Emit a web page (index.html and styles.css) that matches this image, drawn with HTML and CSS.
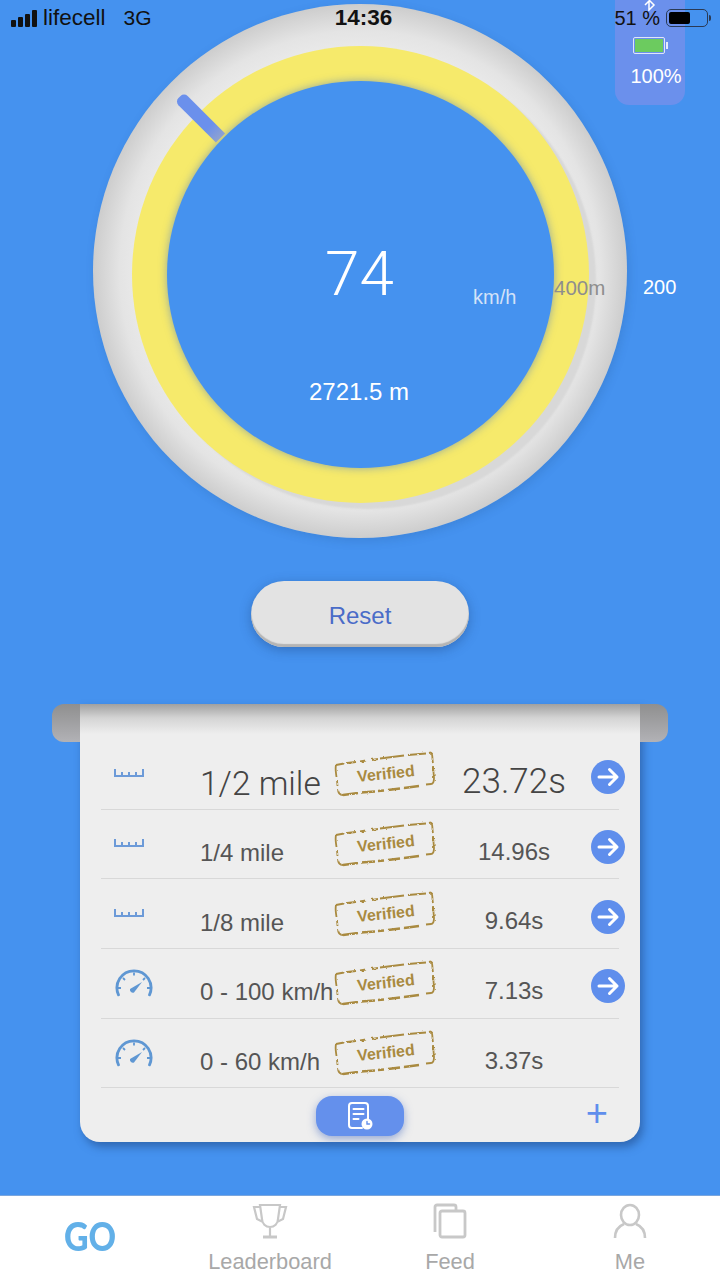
FILE: index.html
```html
<!DOCTYPE html>
<html lang="en">

<head>
   <meta charset="UTF-8">
   <meta name="viewport" content="width=device-width, initial-scale=1.0">
   <title>Drag timer</title>
   <link rel="stylesheet" href="styles.css">
</head>

<body>
   <svg class="defs" width="0" height="0">
      <!-- worn ink edge for the stamps -->
      <filter id="rough" x="-5%" y="-5%" width="110%" height="110%">
         <feTurbulence type="fractalNoise" baseFrequency="0.35" numOctaves="2" seed="4" />
         <feDisplacementMap in="SourceGraphic" scale="2.500" />
      </filter>
      <symbol id="ruler" viewBox="0 0 30 9">
         <path d="M1 1v7h28V1M8 4v4M15 4v4M22 4v4" fill="none" stroke="#6c9ad8" stroke-width="2" />
      </symbol>
      <symbol id="dial" viewBox="0 0 40 28">
         <path d="M4.500 25.800A17 17 0 1 1 35.500 25.800" fill="none" stroke="#5f97d3" stroke-width="2.800" stroke-linecap="round" />
         <path d="M4 19h3M33 19h3M9 9l2 2M31 9l-2 2M20 3.500v3" fill="none" stroke="#5f97d3" stroke-width="1.800" />
         <path d="M16 20L28 13 20 23.500a3 3 0 0 1-4-3.500z" fill="#5f97d3" />
      </symbol>
      <symbol id="go" viewBox="0 0 34 34">
         <circle cx="17" cy="17" r="17" fill="#5f8eec" />
         <path d="M8 17h18M18.500 9.500l7.500 7.500-7.500 7.500" fill="none" stroke="#fff" stroke-width="3" stroke-linecap="round" stroke-linejoin="round" />
      </symbol>
      <symbol id="frame" viewBox="0 0 102 46">
         <g fill="none" stroke="#a98a3f" filter="url(#rough)">
            <path d="M2 14L10 12.500M13 12L22 11M26 10.500L32 9.500M38 9L44 8M46 7.500L70 4.500M74 4L92 2.500M95 2L97 1.500" stroke-width="2" />
            <path d="M2 14C1 18 2 22 2.500 26M3 29L3.500 35M4 38C4 42 5 44 9 44M97 1.500C99 3 98 8 99 12M99 15L100 27C100 31 99 33 97 33L92 33.500" stroke-width="1.800" />
            <path d="M9 44L24 42M27 41.500L41 40.500M44 40L50 39.500M54 39L66 37.500M70 37L85 35" stroke-width="2.400" />
         </g>
      </symbol>
   </svg>

   <div class="status">
      <div class="carrier">
         <span class="signal"><i></i><i></i><i></i><i></i></span>
         <span class="operator">lifecell</span>
         <span class="net">3G</span>
      </div>
      <div class="clock">14:36</div>
      <div class="power">
         <span>51 %</span>
         <span class="phone-batt"><i></i></span>
      </div>
   </div>

   <main>
      <section class="gauge">
         <div class="track">
            <div class="ring">
               <div class="face"></div>
            </div>
         </div>
         <div class="needle"></div>
         <div class="speed">74</div>
         <div class="unit">km/h</div>
         <div class="mark">400m</div>
         <div class="mark-far">200</div>
         <div class="distance">2721.5 m</div>
      </section>

      <button class="reset">Reset</button>

      <section class="scroll">
         <div class="row row-big">
            <svg class="ico-ruler"><use href="#ruler" /></svg>
            <div class="name">1/2 mile</div>
            <div class="stamp"><svg><use href="#frame" /></svg><span>Verified</span></div>
            <div class="time">23.72s</div>
            <svg class="arrow"><use href="#go" /></svg>
         </div>
         <div class="row">
            <svg class="ico-ruler"><use href="#ruler" /></svg>
            <div class="name">1/4 mile</div>
            <div class="stamp"><svg><use href="#frame" /></svg><span>Verified</span></div>
            <div class="time">14.96s</div>
            <svg class="arrow"><use href="#go" /></svg>
         </div>
         <div class="row">
            <svg class="ico-ruler"><use href="#ruler" /></svg>
            <div class="name">1/8 mile</div>
            <div class="stamp"><svg><use href="#frame" /></svg><span>Verified</span></div>
            <div class="time">9.64s</div>
            <svg class="arrow"><use href="#go" /></svg>
         </div>
         <div class="row">
            <svg class="ico-dial"><use href="#dial" /></svg>
            <div class="name">0 - 100 km/h</div>
            <div class="stamp"><svg><use href="#frame" /></svg><span>Verified</span></div>
            <div class="time">7.13s</div>
            <svg class="arrow"><use href="#go" /></svg>
         </div>
         <div class="row">
            <svg class="ico-dial"><use href="#dial" /></svg>
            <div class="name">0 - 60 km/h</div>
            <div class="stamp"><svg><use href="#frame" /></svg><span>Verified</span></div>
            <div class="time">3.37s</div>
         </div>
         <div class="scroll-foot">
            <button class="log">
               <svg width="26" height="28" viewBox="0 0 26 28" fill="none" stroke="#fff" stroke-width="2" stroke-linecap="round">
                  <path d="M15 26H5a3 3 0 0 1-3-3V4a3 3 0 0 1 3-3h13a3 3 0 0 1 3 3v13" />
                  <path d="M6.500 7h10M6.500 12h10M6.500 17h5" />
                  <circle cx="20" cy="22" r="5.500" fill="#fff" stroke="none" />
                  <path d="M20 19.500V22h2.500" stroke="#6490ec" stroke-width="1.400" />
               </svg>
            </button>
            <div class="plus">+</div>
         </div>
      </section>
   </main>

   <div class="batt-panel">
      <svg class="bt" width="12" height="22" viewBox="0 0 12 22" fill="none" stroke="#fff" stroke-width="1.500">
         <path d="M1 6l9 9-5 5V1l5 5-9 9" />
      </svg>
      <span class="batt-green"><i></i></span>
      <span class="batt-pct">100%</span>
   </div>

   <nav class="tabs">
      <div class="tab tab-go">GO</div>
      <div class="tab">
         <svg width="36" height="36" viewBox="0 0 36 36" fill="none" stroke="#c8c8c8" stroke-width="2.200">
            <path d="M8 2h20l-2 14a8 8 0 0 1-16 0zM8 4H2l3 12 6 3M28 4h6l-3 12-6 3M18 24v9" />
            <path d="M11 34h14" stroke-width="3" />
         </svg>
         <span>Leaderboard</span>
      </div>
      <div class="tab">
         <svg width="36" height="36" viewBox="0 0 36 36" fill="none" stroke="#c8c8c8" stroke-width="2.800">
            <path d="M3 29V4a2 2 0 0 1 2-2h17a2 2 0 0 1 2 2v3" />
            <rect x="8" y="8" width="25" height="26" rx="2" />
         </svg>
         <span>Feed</span>
      </div>
      <div class="tab">
         <svg width="36" height="36" viewBox="0 0 36 36" fill="none" stroke="#c8c8c8" stroke-width="2.600">
            <ellipse cx="18" cy="12" rx="9" ry="10" />
            <path d="M3 35c0-8 4-12 9-14M33 35c0-8-4-12-9-14" />
         </svg>
         <span>Me</span>
      </div>
   </nav>
</body>

</html>
```

FILE: styles.css
```css
* {
   margin: 0;
   padding: 0;
   box-sizing: border-box;
}

body {
   width: 720px;
   height: 1280px;
   overflow: hidden;
   position: relative;
   display: flex;
   flex-direction: column;
   background: #4592ef;
   font-family: 'Liberation Sans', Arial, sans-serif;
}

button {
   font-family: inherit;
   border: none;
}

.defs {
   position: absolute;
}

/* status bar sits over the dial */
.status {
   position: absolute;
   z-index: 3;
   top: 0;
   left: 0;
   width: 100%;
   height: 36px;
   padding: 0 10px 0 11px;
   display: grid;
   grid-template-columns: 1fr auto 1fr;
   align-items: center;
   color: #111;
   font-size: 21px;
}

.carrier {
   display: flex;
   align-items: center;
}

.signal {
   display: flex;
   align-items: flex-end;
   gap: 2px;
   height: 17px;
   margin-right: 6px;
}

.signal i {
   width: 5px;
   background: #111;
   border-radius: 1px;
}

.signal i:nth-child(1) { height: 7px; }
.signal i:nth-child(2) { height: 10px; }
.signal i:nth-child(3) { height: 13px; }
.signal i:nth-child(4) { height: 17px; }

.operator {
   font-size: 22.500px;
}

.net {
   margin-left: 18px;
}

.clock {
   margin-left: 6px;
   font-size: 22.500px;
   font-weight: 700;
}

.power {
   display: flex;
   align-items: center;
   justify-content: flex-end;
   gap: 6px;
   font-size: 20px;
}

.phone-batt {
   position: relative;
   width: 42px;
   height: 18px;
   padding: 2px;
   border: 1px solid #2a3a55;
   border-radius: 5px;
   margin-right: 2px;
}

.phone-batt i {
   display: block;
   width: 21px;
   height: 12px;
   background: #000;
   border-radius: 2px;
}

.phone-batt::after {
   content: '';
   position: absolute;
   right: -4px;
   top: 5px;
   width: 2px;
   height: 6px;
   background: #2a3a55;
   border-radius: 0 2px 2px 0;
}

.batt-panel {
   position: absolute;
   z-index: 2;
   top: 0;
   left: 615px;
   width: 70px;
   height: 105px;
   background: #6b90ec;
   border-radius: 0 0 14px 14px;
   display: flex;
   flex-direction: column;
   align-items: center;
   color: #fff;
}

.bt {
   position: absolute;
   top: -10px;
   left: 29px;
}

.batt-green {
   position: relative;
   width: 32px;
   height: 17px;
   margin-top: 37px;
   margin-right: 2px;
   padding: 1px;
   border: 1px solid #dfe6f8;
   border-radius: 2px;
}

.batt-green i {
   display: block;
   height: 100%;
   background: #6ccb5f;
}

.batt-green::after {
   content: '';
   position: absolute;
   right: -4px;
   top: 4px;
   width: 2px;
   height: 7px;
   background: #e6ecfb;
}

.batt-pct {
   margin-top: 11px;
   margin-left: 12px;
   font-size: 20px;
}

main {
   flex: 1;
   display: flex;
   flex-direction: column;
   align-items: center;
   padding-top: 4px;
}

.gauge {
   position: relative;
   width: 534px;
   height: 534px;
}

.track {
   width: 100%;
   height: 100%;
   padding-top: 6px;
   display: flex;
   align-items: center;
   justify-content: center;
   border-radius: 50%;
   background: radial-gradient(circle closest-side, #ececec 80%, #e4e4e4 90%, #cdcdcd 100%);
   box-shadow: 2px 3px 10px rgba(30, 70, 130, 0.18);
}

.ring {
   width: 457px;
   height: 457px;
   display: flex;
   align-items: center;
   justify-content: center;
   border-radius: 50%;
   background: #f6ea6b;
   box-shadow: 7px 6px 2px #d8d8d8;
}

.face {
   width: 387px;
   height: 387px;
   border-radius: 50%;
   background: #4592ef;
   box-shadow: 0 0 8px rgba(90, 130, 190, 0.65);
}

.needle {
   position: absolute;
   left: 78px;
   top: 107px;
   width: 58px;
   height: 13px;
   border-radius: 5px 0 0 5px;
   background: linear-gradient(to right, #6b90ec 72%, #8fa2d0);
   transform: rotate(45deg);
}

.speed,
.unit,
.mark,
.mark-far,
.distance {
   position: absolute;
   white-space: nowrap;
}

.speed {
   left: 232px;
   top: 233px;
   color: #fff;
   font-family: Roboto, sans-serif;
   font-size: 62px;
   font-weight: 300;
}

.unit {
   left: 380px;
   top: 282px;
   color: #d3e2f8;
   font-size: 20px;
}

.mark {
   left: 461px;
   top: 272px;
   color: #8e8e8e;
   font-size: 20.500px;
}

.mark-far {
   left: 550px;
   top: 272px;
   color: #fff;
   font-size: 20px;
}

.distance {
   left: 216px;
   top: 374px;
   color: #fff;
   font-size: 24px;
}

.reset {
   width: 218px;
   height: 66px;
   margin-top: 43px;
   padding-top: 4px;
   border-radius: 33px;
   background: #e3e3e3;
   color: #4a6cc8;
   font-size: 24px;
   box-shadow: inset 0 -3px 1px #b4b4b4, 0 3px 12px rgba(20, 50, 100, 0.35);
}

.scroll {
   position: relative;
   width: 560px;
   height: 438px;
   margin-top: 57px;
   padding: 36px 21px 0;
   border-radius: 0 0 20px 20px;
   background: #eeeeee linear-gradient(#a0a0a0, #d4d4d4 14px, #eeeeee 30px) no-repeat top / 100% 32px;
   box-shadow: 3px 5px 8px rgba(30, 70, 130, 0.55);
}

/* ends of the paper roll */
.scroll::before,
.scroll::after {
   content: '';
   position: absolute;
   top: 0;
   width: 28px;
   height: 38px;
   background: linear-gradient(#8f8f8f, #b2b2b6);
}

.scroll::before {
   left: -28px;
   border-radius: 12px 0 0 12px;
}

.scroll::after {
   right: -28px;
   border-radius: 0 12px 12px 0;
}

.row {
   height: 69.700px;
   display: grid;
   grid-template-columns: 99px 134px 102px 156px 28px;
   align-items: center;
   border-bottom: 1px solid #d8d8d8;
   color: #555;
}

.ico-ruler {
   width: 30px;
   height: 9px;
   margin-left: 13px;
   margin-bottom: 3px;
}

.ico-dial {
   width: 40px;
   height: 28px;
   margin-left: 13px;
}

.name {
   padding-top: 18px;
   font-size: 24px;
   white-space: nowrap;
}

.stamp {
   position: relative;
   width: 102px;
   height: 46px;
   display: flex;
   align-items: center;
   justify-content: center;
   color: #a98a3f;
   font-size: 16px;
   font-weight: 700;
}

.stamp svg {
   position: absolute;
   left: 0;
   top: 0;
   width: 102px;
   height: 46px;
}

.stamp span {
   margin-left: 2px;
   transform: rotate(-6deg);
}

.time {
   padding-top: 15px;
   text-align: center;
   font-size: 24px;
}

.arrow {
   width: 34px;
   height: 34px;
   margin-top: 6px;
   margin-left: -1px;
}

/* first row is the headline result, larger and lighter */
.row-big .name,
.row-big .time {
   font-family: Roboto, sans-serif;
   font-weight: 300;
   font-size: 33.500px;
   color: #444;
}

.row-big .time {
   font-size: 35px;
}

.scroll-foot {
   display: grid;
   grid-template-columns: 1fr 88px 1fr;
   align-items: center;
   padding-top: 7px;
}

.log {
   grid-column: 2;
   height: 40px;
   display: flex;
   align-items: center;
   justify-content: center;
   border-radius: 16px;
   background: #6490ec;
   box-shadow: 0 3px 8px rgba(60, 100, 190, 0.5);
}

.plus {
   grid-column: 3;
   padding-right: 11px;
   padding-bottom: 5px;
   text-align: right;
   color: #5f8eec;
   font-size: 38px;
   line-height: 36px;
}

.tabs {
   height: 85px;
   display: grid;
   grid-template-columns: repeat(4, 180px);
   background: #fff;
   border-top: 1px solid #7aa6de;
}

.tab {
   display: flex;
   flex-direction: column;
   align-items: center;
   padding-top: 7px;
   color: #a8a8a8;
   font-size: 21.800px;
}

.tab span {
   margin-top: 10px;
}

.tab-go {
   padding-top: 16px;
   color: #62b0e8;
   font-family: Lato, sans-serif;
   font-size: 40px;
   font-weight: 900;
   transform: scaleX(0.85);
}
```
